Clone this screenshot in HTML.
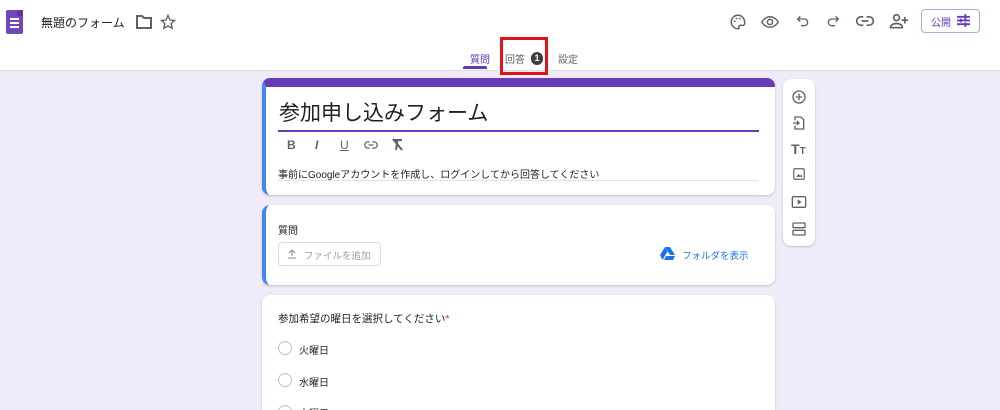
<!DOCTYPE html><html><head><meta charset="utf-8"><style>
*{box-sizing:border-box;margin:0;padding:0}
html,body{width:1000px;height:410px;overflow:hidden}
body{background:#f0ebf8;font-family:"Liberation Sans","Noto Sans CJK JP",sans-serif;position:relative;color:#202124}
.hdr{position:absolute;left:0;top:0;width:1000px;height:71px;background:#fff;border-bottom:1px solid #dadce0}
.a{position:absolute;white-space:nowrap}
.card{position:absolute;background:#fff;border-radius:8px;box-shadow:0 1px 2px rgba(0,0,0,.2)}
svg{position:absolute}
.ic{stroke:#5f6368;fill:none;stroke-width:2}
</style></head><body>
<div class="hdr">
<div class="a" style="left:6px;top:10px;width:17px;height:24px;background:#7248b9;border-radius:2px"></div>
<div class="a" style="left:17px;top:10px;width:6px;height:6px;background:#5c3a9a"></div>
<div class="a" style="left:10px;top:18px;width:9px;height:2px;background:#fff;box-shadow:0 4px 0 #fff,0 8px 0 #fff"></div>
<div class="a" style="left:41px;top:14px;font-size:12px;color:#202124">無題のフォーム</div>
<svg style="left:136px;top:15px" width="16" height="14" viewBox="0 0 16 14"><path class="ic" stroke-width="1.6" d="M1 1h5l2 2h7v10H1z"/></svg>
<svg style="left:160px;top:14px" width="16" height="16" viewBox="0 0 24 24"><path class="ic" d="M12 2l3 7 7 .6-5.4 4.7 1.7 7.2L12 17.8 5.7 21.5l1.7-7.2L2 9.6 9 9z"/></svg>
<svg style="left:729px;top:13px" width="18" height="18" viewBox="0 0 24 24"><path class="ic" d="M12 3a9 9 0 100 18c1.5 0 1.8-1 1.2-2-.6-1 0-2.5 1.5-2.5H18a3 3 0 003-3C21 7 17 3 12 3z"/><circle cx="7.5" cy="11" r="1.2" fill="#5f6368"/><circle cx="10" cy="7.5" r="1.2" fill="#5f6368"/><circle cx="14.5" cy="7.5" r="1.2" fill="#5f6368"/></svg>
<svg style="left:761px;top:14px" width="18" height="16" viewBox="0 0 24 20"><path class="ic" d="M1 10s4-7 11-7 11 7 11 7-4 7-11 7S1 10 1 10z"/><circle class="ic" cx="12" cy="10" r="3.5"/></svg>
<svg style="left:795px;top:13px" width="16" height="16" viewBox="0 0 24 24"><path class="ic" d="M8 5L4 9l4 4M4 9h10a5 5 0 010 10H9"/></svg>
<svg style="left:825px;top:13px" width="16" height="16" viewBox="0 0 24 24"><path class="ic" d="M16 5l4 4-4 4M20 9H10a5 5 0 000 10h5"/></svg>
<svg style="left:855px;top:14px" width="20" height="14" viewBox="0 0 24 16"><path class="ic" d="M10 3H7a5 5 0 000 10h3M14 3h3a5 5 0 010 10h-3M8 8h8"/></svg>
<svg style="left:889px;top:12px" width="20" height="18" viewBox="0 0 24 20"><circle class="ic" cx="9" cy="6" r="3.5"/><path class="ic" d="M2 18c0-4 4-5 7-5s7 1 7 5zM19 5v8M15 9h8"/></svg>
<div class="a" style="left:921px;top:9px;width:59px;height:24px;border:1px solid #b9a3e3;border-radius:4px"></div>
<div class="a" style="left:931px;top:14px;font-size:10px;color:#673ab7">公開</div>
<svg style="left:957px;top:14px" width="13" height="13" viewBox="0 0 14 14"><path stroke="#673ab7" stroke-width="2" d="M0 3h14M0 7h14M0 11h14M9 0v6M4 5v4M9 9v5"/></svg>
<div class="a" style="left:470px;top:51px;font-size:10px;color:#673ab7">質問</div>
<div class="a" style="left:463px;top:66px;width:24px;height:3px;background:#673ab7;border-radius:2px 2px 0 0"></div>
<div class="a" style="left:505px;top:51px;font-size:10px;color:#5f6368">回答</div>
<div class="a" style="left:531px;top:52px;width:12px;height:13px;border-radius:6px;background:#3c4043;color:#fff;font-size:9px;font-weight:bold;text-align:center;line-height:13px">1</div>
<div class="a" style="left:500px;top:37px;width:48px;height:38px;border:3px solid #e0131b"></div>
<div class="a" style="left:558px;top:51px;font-size:10px;color:#5f6368">設定</div>
</div>
<div class="a" style="left:500px;top:71px;width:48px;height:4px;border:3px solid #e0131b;border-top:none"></div>

<div class="card" style="left:262px;top:78px;width:513px;height:117px;overflow:hidden;border-left:4px solid #4285f4;border-top:9px solid #673ab7"></div>
<div class="a" style="left:279px;top:97px;font-size:21px;color:#202124">参加申し込みフォーム</div>
<div class="a" style="left:278px;top:130px;width:481px;height:2px;background:#673ab7"></div>
<div class="a" style="left:287px;top:138px;font-size:12px;font-weight:bold;color:#5f6368">B</div>
<div class="a" style="left:315px;top:138px;font-size:12px;font-style:italic;font-weight:bold;color:#5f6368">I</div>
<div class="a" style="left:340px;top:138px;font-size:12px;text-decoration:underline;color:#5f6368">U</div>
<svg style="left:363px;top:140px" width="16" height="10" viewBox="0 0 24 16"><path class="ic" d="M10 3H7a5 5 0 000 10h3M14 3h3a5 5 0 010 10h-3M8 8h8"/></svg>
<svg style="left:391px;top:138px" width="13" height="13" viewBox="0 0 13 13"><path class="ic" stroke-width="1.5" d="M2 2h9M6.5 2l-1.5 10M2 1l9 11"/></svg>
<div class="a" style="left:278px;top:166px;font-size:10px;color:#202124">事前にGoogleアカウントを作成し、ログインしてから回答してください</div>
<div class="a" style="left:278px;top:180px;width:481px;height:1px;background:#e0e0e0"></div>

<div class="card" style="left:262px;top:205px;width:513px;height:80px;border-left:4px solid #4285f4"></div>
<div class="a" style="left:278px;top:222px;font-size:10px">質問</div>
<div class="a" style="left:278px;top:242px;width:103px;height:24px;border:1px solid #dadce0;border-radius:4px"></div>
<svg style="left:287px;top:249px" width="10" height="10" viewBox="0 0 10 10"><path stroke="#9aa0a6" stroke-width="1.3" fill="none" d="M5 7V1M2 4l3-3 3 3M1 9h8"/></svg>
<div class="a" style="left:304px;top:248px;font-size:9.5px;color:#9aa0a6">ファイルを追加</div>
<svg style="left:660px;top:247px" width="15" height="13" viewBox="0 0 15 13"><path d="M5 0h5l5 8h-5z" fill="#1a73e8"/><path d="M5 0L0 8l2.5 5 5-8.5z" fill="#1a73e8"/><path d="M4 13h9l2-4H6z" fill="#1a73e8"/></svg>
<div class="a" style="left:682px;top:248px;font-size:9.5px;color:#1a73e8">フォルダを表示</div>

<div class="card" style="left:262px;top:295px;width:513px;height:130px"></div>
<div class="a" style="left:278px;top:311px;font-size:10.5px">参加希望の曜日を選択してください<span style="color:#d93025">*</span></div>
<div class="a" style="left:278px;top:341px;width:14px;height:14px;border:1.5px solid #bdc1c6;border-radius:50%"></div>
<div class="a" style="left:299px;top:342px;font-size:10px">火曜日</div>
<div class="a" style="left:278px;top:373px;width:14px;height:14px;border:1.5px solid #bdc1c6;border-radius:50%"></div>
<div class="a" style="left:299px;top:374px;font-size:10px">水曜日</div>
<div class="a" style="left:278px;top:405px;width:14px;height:14px;border:1.5px solid #bdc1c6;border-radius:50%"></div>
<div class="a" style="left:299px;top:405px;font-size:10px">木曜日</div>

<div class="card" style="left:783px;top:79px;width:32px;height:167px"></div>
<svg style="left:791px;top:89px" width="16" height="16" viewBox="0 0 24 24"><circle class="ic" cx="12" cy="12" r="9"/><path class="ic" d="M12 7v10M7 12h10"/></svg>
<svg style="left:791px;top:115px" width="16" height="16" viewBox="0 0 24 24"><path class="ic" d="M6 8V3h9l4 4v14H6v-5M3 12h9M9 9l3 3-3 3"/></svg>
<div class="a" style="left:791px;top:141px;font-size:14px;font-weight:bold;color:#5f6368">T<span style="font-size:10px">T</span></div>
<svg style="left:792px;top:167px" width="14" height="14" viewBox="0 0 24 24"><rect class="ic" x="3" y="3" width="18" height="18" rx="2"/><path d="M7 17l4-5 3 3 2-2 2 4z" fill="#5f6368"/></svg>
<svg style="left:791px;top:195px" width="16" height="14" viewBox="0 0 24 20"><rect class="ic" x="2" y="2" width="20" height="16" rx="2"/><path d="M10 6v8l6-4z" fill="#5f6368"/></svg>
<svg style="left:791px;top:221px" width="16" height="16" viewBox="0 0 24 24"><rect class="ic" x="3" y="3" width="18" height="7" rx="1"/><rect class="ic" x="3" y="14" width="18" height="7" rx="1"/></svg>
</body></html>
